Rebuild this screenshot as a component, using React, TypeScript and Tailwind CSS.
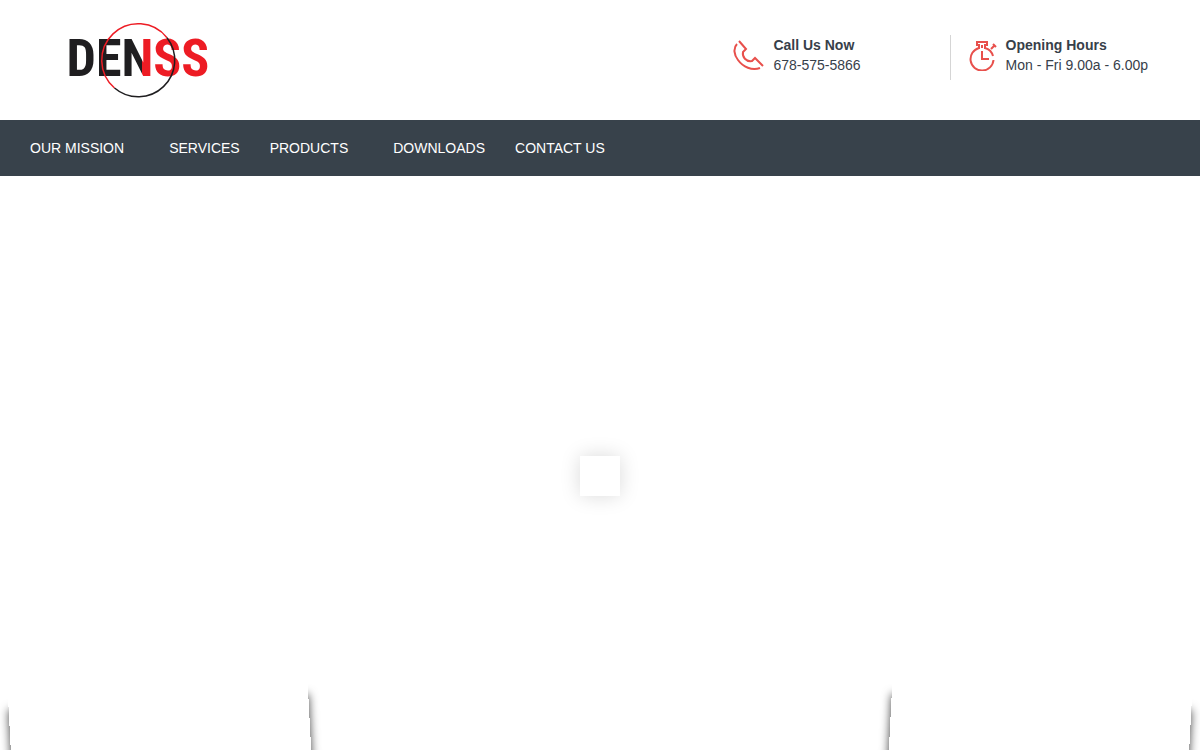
import React from 'react';

const links = [
    { label: 'OUR MISSION', submenu: true },
    { label: 'SERVICES', submenu: false },
    { label: 'PRODUCTS', submenu: true },
    { label: 'DOWNLOADS', submenu: false },
    { label: 'CONTACT US', submenu: false },
];

export default function App() {
    return (
        <div className="h-screen overflow-hidden bg-white font-['Liberation_Sans',Arial,sans-serif] text-sm text-[#37404a]">
            <header className="flex items-start justify-between py-5 pl-16 pr-[52px]">
                <a href="#home" aria-label="DENSS home">
                    <Logo />
                </a>
                <div className="flex items-start pt-[15px]">
                    <InfoItem title="Call Us Now" value="678-575-5866" icon={<PhoneIcon />} />
                    <div className="ml-[89px] mr-4 h-[45px] w-px bg-[#d5d5d5]" />
                    <InfoItem title="Opening Hours" value="Mon - Fri 9.00a - 6.00p" icon={<StopwatchIcon />} />
                </div>
            </header>

            <nav className="h-14 bg-[#38424b] px-[30px]">
                <ul className="flex h-full items-center gap-[30px]">
                    {links.map(({ label, submenu }) => (
                        <li key={label} className={submenu ? 'pr-[15px]' : ''}>
                            <a href="#" className="leading-5 text-white">{label}</a>
                        </li>
                    ))}
                </ul>
            </nav>

            {/* Slider, still loading */}
            <main className="relative flex h-[600px] items-center justify-center overflow-hidden">
                <div role="status" aria-label="Loading" className="size-10 bg-white shadow-[0_0_20px_rgba(0,0,0,0.15)]" />

                {/* Lifted corner shadows */}
                <div aria-hidden="true" className="absolute inset-x-2.5 bottom-0 flex justify-between">
                    <div className="h-[90px] w-[300px] -rotate-3 shadow-[0_16px_10px_#444]" />
                    <div className="h-[90px] w-[300px] rotate-3 shadow-[0_16px_10px_#444]" />
                </div>
            </main>
        </div>
    );
}

const InfoItem = ({ title, value, icon }: { title: string; value: string; icon: React.ReactNode }) => (
    <div className="flex items-center gap-2">
        {icon}
        <div className="leading-5">
            <p className="font-bold">{title}</p>
            <p>{value}</p>
        </div>
    </div>
);

const Logo = () => (
    <svg width="148" height="80" viewBox="0 0 148 80" className="block">
        <defs>
            {/* Hard stop on the last stroke of the N */}
            <linearGradient id="logo-fill" gradientUnits="userSpaceOnUse" x1="0" y1="0" x2="148" y2="0">
                <stop offset="0.53" stopColor="#1f1e20" />
                <stop offset="0.53" stopColor="#ed1c24" />
            </linearGradient>
        </defs>
        <text
            x="74"
            y="56"
            textAnchor="middle"
            fontSize="52"
            fontWeight="700"
            fontFamily="'Liberation Sans Narrow', 'Roboto Condensed', 'Liberation Sans', sans-serif"
            fill="url(#logo-fill)"
        >
            DENSS
        </text>
        <path d="M50.500 68A36.500 36.500 0 1 1 103 17.800" fill="none" stroke="#ed1c24" strokeWidth="1.5" />
        <path d="M103 17.800A36.500 36.500 0 0 1 50.500 68" fill="none" stroke="#1f1e20" strokeWidth="1.5" />
    </svg>
);

const PhoneIcon = () => (
    <svg width="32" height="32" viewBox="0 0 32 32" fill="none" stroke="#e8504c" strokeWidth="2">
        <path d="M4 5C0 9 1 16 5 21C10 28 19 32 27 29" />
        <path d="M6 2L13 10L10 13C9 18 13 23 19 22L22 19L30 27" />
    </svg>
);

const StopwatchIcon = () => (
    <svg width="31" height="32" viewBox="0 0 31 32" fill="none" stroke="#e8504c" strokeWidth="2">
        <path d="M12 9A11.500 11.500 0 1 0 26.500 21M26 17A11.500 11.500 0 0 0 18 9" />
        <path d="M12 10V6H10V3H20V6H18V10M15 6V9" />
        <path d="M15 12V20H22" />
        <path d="M24 10L27 7M26 5L29 8" />
    </svg>
);
